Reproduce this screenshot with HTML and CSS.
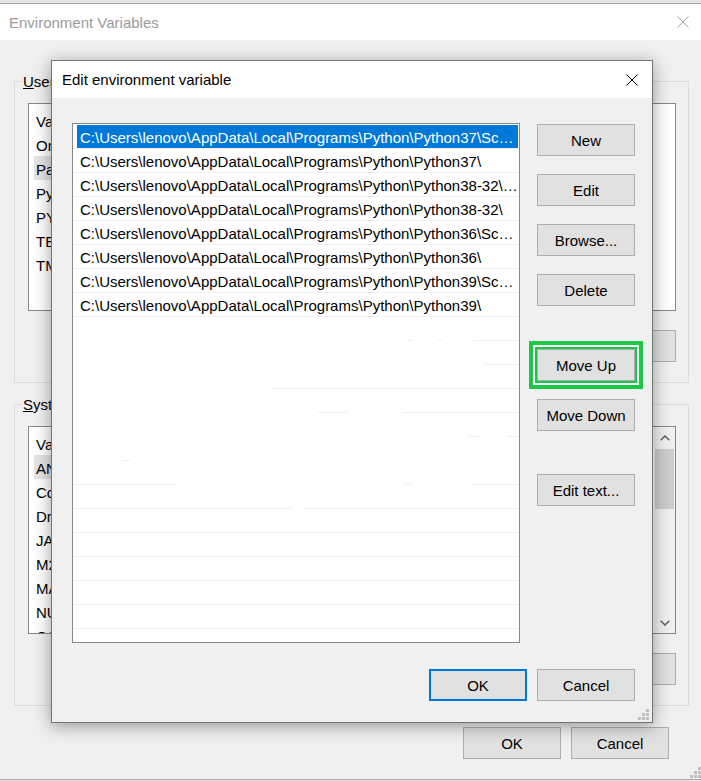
FILE: index.html
```html
<!DOCTYPE html>
<html lang="en">
<head>
<meta charset="UTF-8" />
<meta name="viewport" content="width=device-width, initial-scale=1.0"/>
<title>Environment Variables</title>
<link rel="stylesheet" href="styles.css">
</head>
<body>
<div class="window">
  <div class="titlebar">
    <span class="title">Environment Variables</span>
    <svg class="x" width="12" height="12" viewBox="0 0 12 12"><path d="M.5.5l11 11M11.5.5l-11 11" stroke="#a3a3a3" fill="none"/></svg>
  </div>
  <div class="content">
    <div class="group">
      <span class="legend"><u>U</u>ser variables for lenovo</span>
      <div class="varlist">
        <div class="vl-body">
          <div class="vl-head">Variable</div>
          <div class="vl-row">OneDrive</div>
          <div class="vl-row sel">Path</div>
          <div class="vl-row">PyCharm Community Edition</div>
          <div class="vl-row">PYTHONPATH</div>
          <div class="vl-row">TEMP</div>
          <div class="vl-row">TMP</div>
        </div>
      </div>
      <div class="group-btns">
        <button class="btn">New...</button>
        <button class="btn">Edit...</button>
        <button class="btn">Delete</button>
      </div>
    </div>
    <div class="group">
      <span class="legend"><u>S</u>ystem variables</span>
      <div class="varlist">
        <div class="vl-body">
          <div class="vl-head">Variable</div>
          <div class="vl-row sel">ANDROID_HOME</div>
          <div class="vl-row">ComSpec</div>
          <div class="vl-row">DriverData</div>
          <div class="vl-row">JAVA_HOME</div>
          <div class="vl-row">M2_HOME</div>
          <div class="vl-row">MAVEN_HOME</div>
          <div class="vl-row">NUMBER_OF_PROCESSORS</div>
          <div class="vl-row">OS</div>
        </div>
        <div class="scrollbar">
          <div class="sb-arrow"><svg width="10" height="6" viewBox="0 0 10 6"><path d="M.7 5.3L5 1l4.3 4.3" stroke="#606060" stroke-width="1.5" fill="none"/></svg></div>
          <div class="sb-thumb"></div>
          <div class="sb-track"></div>
          <div class="sb-arrow"><svg width="10" height="6" viewBox="0 0 10 6"><path d="M.7.7L5 5 9.3.7" stroke="#606060" stroke-width="1.5" fill="none"/></svg></div>
        </div>
      </div>
      <div class="group-btns">
        <button class="btn">New...</button>
        <button class="btn">Edit...</button>
        <button class="btn">Delete</button>
      </div>
    </div>
    <div class="main-btns">
      <button class="btn">OK</button>
      <button class="btn">Cancel</button>
    </div>
  </div>
  <svg class="grip" width="11" height="11" viewBox="0 0 11 11"><path fill="#bfbfbf" d="M8 0h3v3H8zM4 4h3v3H4zM8 4h3v3H8zM0 8h3v3H0zM4 8h3v3H4zM8 8h3v3H8z"/></svg>
</div>

<div class="dialog">
  <div class="dlg-title">
    <span>Edit environment variable</span>
    <svg class="x" width="12" height="12" viewBox="0 0 12 12"><path d="M.5.5l11 11M11.5.5l-11 11" stroke="#000" fill="none"/></svg>
  </div>
  <div class="dlg-body">
    <div class="pathlist">
      <div class="path sel"><span>C:\Users\lenovo\AppData\Local\Programs\Python\Python37\Scripts\</span></div>
      <div class="path"><span>C:\Users\lenovo\AppData\Local\Programs\Python\Python37\</span></div>
      <div class="path"><span>C:\Users\lenovo\AppData\Local\Programs\Python\Python38-32\Scripts\</span></div>
      <div class="path"><span>C:\Users\lenovo\AppData\Local\Programs\Python\Python38-32\</span></div>
      <div class="path"><span>C:\Users\lenovo\AppData\Local\Programs\Python\Python36\Scripts\</span></div>
      <div class="path"><span>C:\Users\lenovo\AppData\Local\Programs\Python\Python36\</span></div>
      <div class="path"><span>C:\Users\lenovo\AppData\Local\Programs\Python\Python39\Scripts\</span></div>
      <div class="path"><span>C:\Users\lenovo\AppData\Local\Programs\Python\Python39\</span></div>
      <div class="path cut s8"><span></span></div>
      <div class="path cut s9"><span></span></div>
      <div class="path cut s10"><span></span></div>
      <div class="path cut s11"><span></span></div>
      <div class="path cut s12"><span></span></div>
      <div class="path cut s13"><span></span></div>
      <div class="path cut s14"><span></span></div>
      <div class="path cut s15"><span></span></div>
      <div class="path"><span></span></div>
      <div class="path"><span></span></div>
      <div class="path"><span></span></div>
      <div class="path"><span></span></div>
      <div class="path"><span></span></div>
      <div class="path"><span></span></div>
    </div>
    <div class="dlg-btns">
      <button class="btn">New</button>
      <button class="btn">Edit</button>
      <button class="btn">Browse...</button>
      <button class="btn">Delete</button>
      <button class="btn sep marked">Move Up</button>
      <button class="btn">Move Down</button>
      <button class="btn sep">Edit text...</button>
    </div>
  </div>
  <div class="dlg-foot">
    <button class="btn default">OK</button>
    <button class="btn">Cancel</button>
  </div>
  <svg class="grip" width="11" height="11" viewBox="0 0 11 11"><path fill="#bfbfbf" d="M8 0h3v3H8zM4 4h3v3H4zM8 4h3v3H8zM0 8h3v3H0zM4 8h3v3H4zM8 8h3v3H8z"/></svg>
</div>
</body>
</html>
```

FILE: styles.css
```css
html,body {margin:0;padding:0;}
body {background:#e4e4e4;font-family:"Liberation Sans",Arial,sans-serif;font-size:15px;color:#000;}
svg {display:block;}

/* background window */
.window {position:relative;margin-top:3px;border-top:1px solid #a6a6a6;border-bottom:1px solid #a6a6a6;background:#f0f0f0;}
.titlebar {height:36px;background:#fff;display:flex;align-items:center;justify-content:space-between;padding:0 12px 0 9px;}
.titlebar .title {color:#9b9b9b;}
.content {padding:41px 12px 20px 14px;}
.group {border:1px solid #dcdcdc;padding:0 12px 20px 13px;}
.group + .group {margin-top:21px;}
.legend {display:block;width:fit-content;margin:-9px 0 0 -6px;padding:0 1px;line-height:18px;background:#f0f0f0;}
.varlist {margin-top:12px;height:208px;box-sizing:border-box;border:1px solid #828790;background:#fff;display:flex;overflow:hidden;}
.vl-body {flex:1;}
.vl-head {height:28px;box-sizing:border-box;padding:7px 0 0 7px;line-height:21px;}
.vl-row {width:220px;height:24px;box-sizing:border-box;padding:3px 0 0 2px;line-height:21px;margin-left:5px;white-space:nowrap;}
.vl-row.sel {background:#e5e5e5;}
.scrollbar {width:21px;background:#f0f0f0;display:flex;flex-direction:column;}
.sb-arrow {height:21px;display:flex;align-items:center;justify-content:center;}
.sb-thumb {height:60px;margin:1px 1px 0;background:#cdcdcd;}
.sb-track {flex:1;}
.group-btns {display:flex;justify-content:flex-end;gap:10px;margin-top:19px;}
.main-btns {display:flex;justify-content:flex-end;gap:10px;margin:21px 20px 0 0;}
.grip {position:absolute;right:0;bottom:1px;}

.btn {width:98px;height:32px;box-sizing:border-box;border:1px solid #adadad;background:#e1e1e1;font:inherit;color:#000;padding:0;}
.btn.default {border:2px solid #0078d7;}

/* edit dialog */
.dialog {position:absolute;left:51px;top:60px;width:602px;box-sizing:border-box;border:1px solid #737373;background:#f0f0f0;box-shadow:0 3px 16px rgba(0,0,0,.38);}
.dialog .grip {right:3px;bottom:2px;}
.dlg-title {height:37px;background:#fff;display:flex;align-items:center;justify-content:space-between;padding:0 14px 0 10px;}
.dlg-body {display:flex;gap:17px;padding:25px 17px 0 20px;}
.pathlist {width:448px;height:520px;flex:none;box-sizing:border-box;border:1px solid #828790;background:#fff;padding-top:1px;overflow:hidden;}
.path {height:24px;box-sizing:border-box;border-bottom:1px solid #f0f0f0;padding:0 1px 0 4px;}
.path span {display:block;height:23px;box-sizing:border-box;padding:2px 0 0 3px;line-height:21px;white-space:nowrap;overflow:hidden;text-overflow:ellipsis;}
.path.sel span {background:#0078d7;color:#fff;}
.path.cut {border-bottom:0;background-position:left bottom;background-size:100% 1px;background-repeat:no-repeat;}
.s8 {background-image:linear-gradient(90deg,transparent 334px,#f0f0f0 334px 340px,transparent 340px 365px,#f0f0f0 365px 369px,transparent 369px 400px,#f0f0f0 400px);}
.s9 {background-image:linear-gradient(90deg,transparent 411px,#f0f0f0 411px);}
.s10 {background-image:linear-gradient(90deg,transparent 199px,#f0f0f0 199px);}
.s11 {background-image:linear-gradient(90deg,transparent 245px,#f0f0f0 245px 275px,transparent 275px 329px,#f0f0f0 329px);}
.s12 {background-image:linear-gradient(90deg,transparent 395px,#f0f0f0 395px 407px,transparent 407px 434px,#f0f0f0 434px);}
.s13 {background-image:linear-gradient(90deg,transparent 49px,#f0f0f0 49px 57px,transparent 57px);}
.s14 {background-image:linear-gradient(90deg,#f0f0f0 104px,transparent 104px 332px,#f0f0f0 332px 339px,transparent 339px 399px,#f0f0f0 399px);}
.s15 {background-image:linear-gradient(90deg,#f0f0f0 218px,transparent 218px 230px,#f0f0f0 230px);}
.dlg-btns {display:flex;flex-direction:column;gap:18px;padding-top:1px;}
.dlg-btns .sep {margin-top:25px;}
.btn.marked {box-shadow:0 0 0 2px #1bc84a,0 0 0 4px #fff,0 0 0 8px #1bc84a;}
.dlg-foot {display:flex;justify-content:flex-end;gap:10px;padding:26px 17px 21px 0;}
```
